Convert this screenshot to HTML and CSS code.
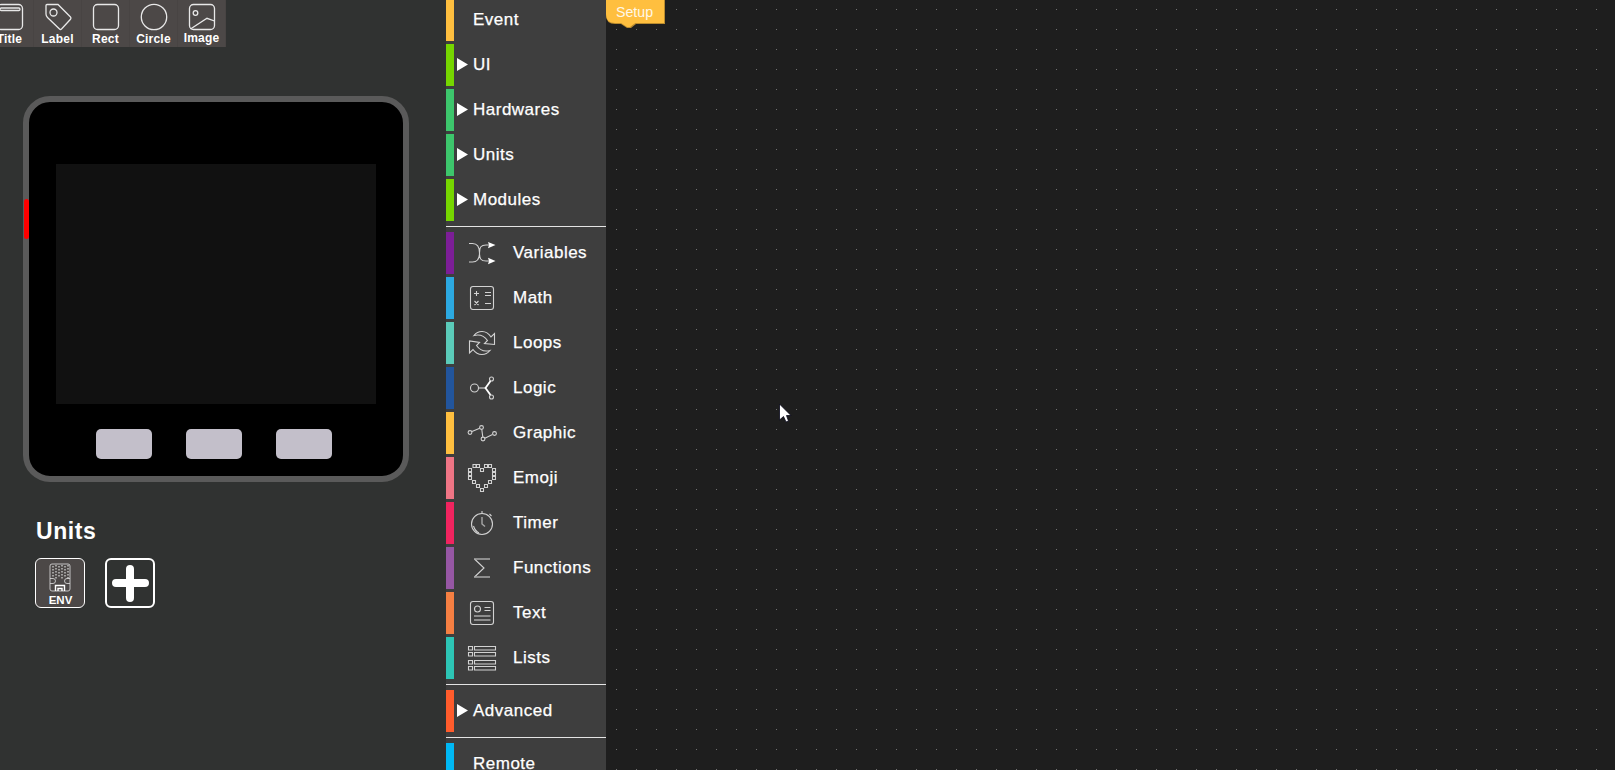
FILE: index.html
```html
<!DOCTYPE html>
<html lang="en">
<head>
<meta charset="utf-8">
<title>Flow editor</title>
<link rel="stylesheet" href="styles.css">
</head>
<body>
<main class="app">
  <section class="panel">
    <div class="palette">
      <div class="tool"><svg viewBox="0 0 48 32"><rect x="11.500" y="4.500" width="25" height="25" rx="4"/><rect x="14" y="8" width="20" height="2.500" rx="1.200"/></svg><span>Title</span></div>
      <div class="tool"><svg viewBox="0 0 48 32"><path d="M13 4.500H24L36.500 17Q37.500 18 36.500 19.300L27.500 29Q26.500 30 25.500 29L13.500 17.500Q12 16 12 14V5.500Q12 4.500 13 4.500Z"/><circle cx="19.500" cy="12.500" r="3.500"/></svg><span>Label</span></div>
      <div class="tool"><svg viewBox="0 0 48 32"><rect x="11.500" y="4.500" width="25" height="25" rx="4"/></svg><span>Rect</span></div>
      <div class="tool"><svg viewBox="0 0 48 32"><circle cx="24" cy="17" r="12.700"/></svg><span>Circle</span></div>
      <div class="tool tool-image"><svg viewBox="0 0 48 32"><rect x="11.500" y="4.500" width="25" height="25" rx="4"/><circle cx="17.500" cy="13" r="2.300"/><path d="M12.500 29L29 18.300L36.500 21"/></svg><span>Image</span></div>
    </div>
    <div class="device">
      <div class="screen"></div>
      <div class="keys"><i></i><i></i><i></i></div>
      <div class="power"></div>
    </div>
    <h2 class="heading">Units</h2>
    <div class="units">
      <div class="unit">
        <svg viewBox="0 0 24 30"><rect x="2" y="1" width="20" height="27" rx="2"/><path class="mesh" d="M5 3v12M8 2v14M11 3v12M14 2v14M17 3v12M20 2v14"/><path d="M2 15.500h3a2.500 2.500 0 0 1 0 5H2M22 15.500h-3a2.500 2.500 0 0 0 0 5h3"/><path class="plug" d="M7.500 28v-5.500h9V28M10 28v-2.500h4V28"/></svg>
        <span>ENV</span>
      </div>
      <div class="unit add"><svg viewBox="0 0 46 46"><path d="M23 9V38M9 23H38"/></svg></div>
    </div>
  </section>

  <nav class="toolbox">
    <div class="row c-amber first"><span class="arrow hidden"></span>Event</div>
    <div class="row c-lime"><span class="arrow"></span>UI</div>
    <div class="row c-green"><span class="arrow"></span>Hardwares</div>
    <div class="row c-green"><span class="arrow"></span>Units</div>
    <div class="row c-lime"><span class="arrow"></span>Modules</div>
    <hr>
    <div class="row c-purple"><svg class="ico" viewBox="0 0 30 30"><path d="M2 5.500h3.500C10 5.500 12.500 9 12.500 15S10 24 5.500 24H2M22 7h-3C14 7 12.500 9 12.500 15S14 23 19 23h3"/><path class="fill" d="M21 4L28.500 7L21 10.300L22 7ZM21 19.700L28.500 23L21 26.300L22 23Z"/></svg>Variables</div>
    <div class="row c-sky"><svg class="ico" viewBox="0 0 30 30"><rect x="3.500" y="3.500" width="23" height="23" rx="2.500"/><path d="M7 10.500h5M9.500 8v5M18 9.500h6M18 12.500h6M7.500 18l4 4M11.500 18l-4 4M18 20.500h6"/></svg>Math</div>
    <div class="row c-mint"><svg class="ico" viewBox="0 0 30 30"><path d="M7 7.500C11 2.500 19 1.500 24 9L27.500 5.500V16.500L17.500 15.500L20.500 12.500C17 7.500 12.500 6 7 7.500ZM23 22.500C19 27.500 11 28.500 6 21.500L2.500 25V13L12.500 14.500L9.500 17.500C13 22.500 17.500 24 23 22.500Z"/></svg>Loops</div>
    <div class="row c-navy"><svg class="ico" viewBox="0 0 30 30"><circle cx="7.500" cy="15" r="4"/><circle cx="24.500" cy="6" r="2"/><circle cx="24.500" cy="24" r="2"/><path d="M12 15h6"/><path class="bold" d="M23.500 8L18.500 15L23.500 22"/></svg>Logic</div>
    <div class="row c-amber"><svg class="ico" viewBox="0 0 30 30"><circle cx="3" cy="14.500" r="1.900"/><circle cx="14.500" cy="9.500" r="1.900"/><circle cx="16" cy="21" r="1.900"/><circle cx="27.500" cy="15.500" r="1.900"/><path d="M5 13.500L12.700 10.300M14.800 11.500L15.800 19M17.800 20.200L25.500 16.500"/></svg>Graphic</div>
    <div class="row c-rose"><svg class="ico" viewBox="0 0 30 30"><path d="M6 1.500h3v3h-3zM9.500 1.500h3v3h-3zM17.500 1.500h3v3h-3zM21.500 1.500h3v3h-3zM1.500 5.500h3v3h-3zM1.500 9.500h3v3h-3zM1.500 13.500h3v3h-3zM25.500 5.500h3v3h-3zM25.500 9.500h3v3h-3zM25.500 13.500h3v3h-3zM13.500 5.500h3v3h-3zM5.500 17.500h3v3h-3zM9.500 21.500h3v3h-3zM13.500 25.500h3v3h-3zM17.500 21.500h3v3h-3zM21.500 17.500h3v3h-3z"/></svg>Emoji</div>
    <div class="row c-pink"><svg class="ico" viewBox="0 0 30 30"><circle cx="15" cy="16" r="10.500"/><path d="M15 3v2.500M22.500 6l2 2M6.500 18Q8 23 12 25"/><path class="dim" d="M15 9v7l3 2.500"/></svg>Timer</div>
    <div class="row c-violet"><svg class="ico" viewBox="0 0 30 30"><path d="M7.500 6L17 15L7.500 24"/><path class="dim" d="M7 6h16M7 24h16"/></svg>Functions</div>
    <div class="row c-orange"><svg class="ico" viewBox="0 0 30 30"><rect x="3.500" y="3.500" width="23" height="23" rx="2.500"/><circle cx="10.500" cy="11" r="3"/><path d="M17.500 9.500h6M17.500 12.500h6"/><path class="dim" d="M7 18h16.500M7 22h16.500"/></svg>Text</div>
    <div class="row c-teal"><svg class="ico" viewBox="0 0 30 30"><path d="M1.500 3.500h4v3.500h-4zM7.500 3.500h21v3.500h-21zM1.500 9.500h4v3.500h-4zM7.500 9.500h21v3.500h-21zM1.500 17.500h4v3.500h-4zM7.500 17.500h21v3.500h-21zM1.500 23.500h4v3.500h-4zM7.500 23.500h21v3.500h-21z"/></svg>Lists</div>
    <hr>
    <div class="row c-red"><span class="arrow"></span>Advanced</div>
    <hr>
    <div class="row c-cyan"><span class="arrow hidden"></span>Remote</div>
  </nav>

  <section class="workspace">
    <div class="block">
      <svg viewBox="0 0 60 29"><path class="shade" d="M0 0H59V24H30L25 28H21L15 24H9Q0 24 0 15Z"/><path class="face" d="M0 0H58V23H29.500Q27 24.500 24 27H21Q18 25 15 23H9Q0 23 0 14Z"/></svg>
      <span>Setup</span>
    </div>
    <svg class="pointer" viewBox="0 0 13 21"><path d="M.5 1V17L4.500 13.500L7 19L9.500 18L7.500 12.500H12Z"/></svg>
  </section>
</main>
</body>
</html>
```
FILE: styles.css
```css
* { box-sizing: border-box; }
body { margin: 0; overflow: hidden; background: #1e1e1e; color: #fff; font-family: "Liberation Sans", Arial, sans-serif; }
svg { display: block; fill: none; stroke: #e8e8e8; }
.app { display: flex; width: 100%; height: 770px; overflow: hidden; }

.panel { width: 446px; flex: none; background: #303231; overflow: hidden; }
.palette { display: flex; width: 240px; height: 47px; margin-left: -14px; background: #4c4847; }
.tool { width: 48px; border-right: 1px solid #484443; text-align: center; font-size: 12px; font-weight: bold; line-height: 14px; text-indent: 2px; letter-spacing: .2px; }
.tool svg { width: 48px; height: 32px; stroke-width: 1.3; }
.tool-image span { position: relative; top: -1px; }

.device { position: relative; width: 386px; height: 386px; margin: 49px 0 0 23px; padding: 62px 27px 0; border: 6px solid #5a5a5a; border-radius: 27px; background: #000; }
.screen { width: 320px; height: 240px; background: #111; }
.keys { display: flex; gap: 34px; margin: 25px 0 0 40px; }
.keys i { width: 56px; height: 30px; border-radius: 5px; background: #c3bfca; }
.power { position: absolute; left: -5px; top: 97px; width: 5px; height: 40px; border-radius: 3px; background: #f00; }

.heading { margin: 35px 0 0 36px; font-size: 23px; line-height: 28px; letter-spacing: .6px; }
.units { display: flex; gap: 20px; margin: 13px 0 0 35px; }
.unit { width: 50px; height: 50px; border: 1px solid #fff; border-radius: 6px; background: #4c4847; text-align: center; font-size: 11.5px; font-weight: bold; line-height: 11px; }
.unit svg { width: 24px; height: 30px; margin: 4px auto 2px; stroke-width: .9; stroke: #d0d0d0; }
.unit span { padding-left: 1px; }
.unit .mesh { stroke-dasharray: 1.5 1.5; stroke-width: 1.3; }
.unit .plug { stroke: #fff; stroke-width: 1.4; }
.unit.add { border: 2px solid #fff; background: #303231; }
.unit.add svg { width: 46px; height: 46px; margin: 0; stroke: #fff; stroke-width: 8; stroke-linecap: round; }

.toolbox { width: 160px; flex: none; background: #3e3e3e; overflow: hidden; }
.row { display: flex; align-items: center; height: 42px; margin-bottom: 3px; border-left: 8px solid; color: #fff; font-size: 17px; letter-spacing: .5px; white-space: nowrap; -webkit-text-stroke: .25px #fff; }
.row.first { margin-top: -1px; }
.toolbox hr { height: 1px; margin: 5px 0; border: 0; background: #e4e4e4; }
.row:has(+ hr) { margin-bottom: 0; }
.arrow { width: 11px; height: 13px; margin: 0 5px 1px 3px; background: #fff; clip-path: polygon(0 0, 100% 50%, 0 100%); }
.arrow.hidden { visibility: hidden; }
.ico { width: 30px; height: 30px; margin: 0 16px 0 13px; stroke: #d2d2d2; stroke-width: 1.1; }
.ico .fill { fill: #fff; stroke: none; }
.ico .bold { stroke: #fff; stroke-width: 1.8; }
.ico .dim { stroke: #a8a8a8; stroke-width: 1.4; }
.c-amber { border-color: #ffbf3f; }
.c-lime { border-color: #76d600; }
.c-green { border-color: #3dc66c; }
.c-purple { border-color: #7c1e97; }
.c-sky { border-color: #2ca9e1; }
.c-mint { border-color: #5bcbb9; }
.c-navy { border-color: #22559c; }
.c-rose { border-color: #ef7585; }
.c-pink { border-color: #f0245f; }
.c-violet { border-color: #9657a4; }
.c-orange { border-color: #f57f42; }
.c-teal { border-color: #2dc5b5; }
.c-red { border-color: #ff5c2c; }
.c-cyan { border-color: #00b8f4; }

.workspace { position: relative; flex: 1; background: conic-gradient(from 270deg at 1px 1px, #707070 90deg, #1e1e1e 0) 10px 9px / 20px 20px; }
.block { position: relative; width: 60px; height: 29px; }
.block svg { width: 60px; height: 29px; stroke: none; }
.shade { fill: #b98b2e; }
.face { fill: #ffbf3f; }
.block span { position: absolute; left: 10px; top: 3px; font-size: 14.2px; line-height: 18px; color: #fff8e8; }
.pointer { position: absolute; left: 173px; top: 403px; width: 13px; height: 21px; fill: #fff; stroke: #08081a; stroke-width: .8; }
```
